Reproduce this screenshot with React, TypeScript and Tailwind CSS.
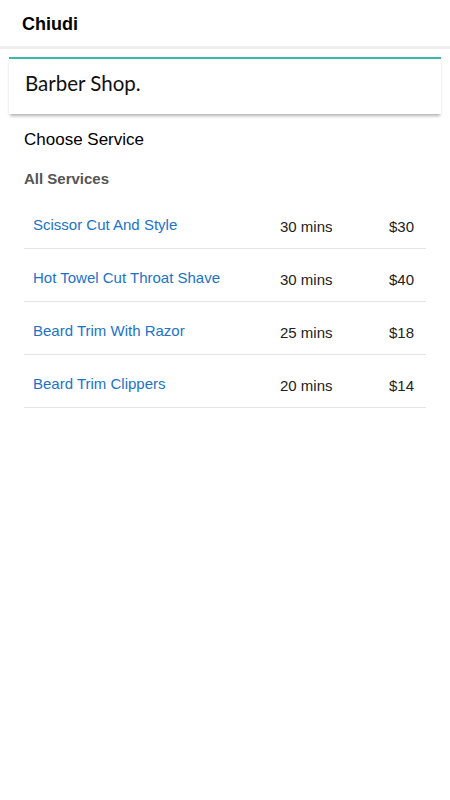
export default function App() {
  const services = [
    { name: "Scissor Cut And Style", time: "30 mins", price: "$30" },
    { name: "Hot Towel Cut Throat Shave", time: "30 mins", price: "$40" },
    { name: "Beard Trim With Razor", time: "25 mins", price: "$18" },
    { name: "Beard Trim Clippers", time: "20 mins", price: "$14" },
  ];

  return (
    <div className="min-h-[800px] w-[450px] bg-white font-['Liberation_Sans',Arial,sans-serif]">
      <header className="h-[49px] border-b-[3px] border-[#eeeeee] px-[22px] pt-[11px]">
        <span className="text-[18px] font-bold text-black">Chiudi</span>
      </header>
      <div className="mx-[9px] mt-[8px] border-t-2 border-[#3bb8a8] bg-white shadow-[0_3px_3px_-1px_rgba(0,0,0,0.3)]">
        <div className="flex h-[55px] items-center px-[16px] pb-[6px] font-['Lato',sans-serif] text-[20.5px] text-[#111]">
          Barber Shop.
        </div>
      </div>
      <div className="px-[24px]">
        <h2 className="mt-[13px] text-[17px] text-black">Choose Service</h2>
        <h3 className="mt-[15px] text-[15px] font-bold text-[#555]">All Services</h3>
        <ul className="mt-[6px]">
          {services.map((s) => (
            <li key={s.name} className="flex h-[53px] items-center border-b border-[#e5e5e5] pt-[11px] text-[15px]">
              <span className="flex-1 pl-[9px] pb-[5px] text-[#1a73c8]">{s.name}</span>
              <span className="w-[109px] text-[#222]">{s.time}</span>
              <span className="w-[37px] text-[#222]">{s.price}</span>
            </li>
          ))}
        </ul>
      </div>
    </div>
  );
}
